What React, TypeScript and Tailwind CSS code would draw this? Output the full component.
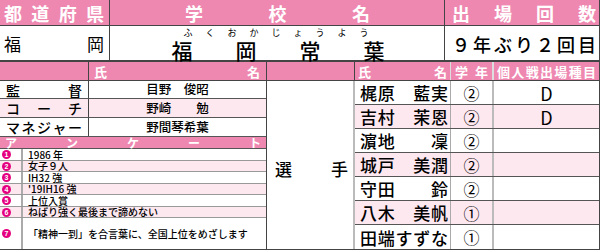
import React from 'react';

function Spread({ text, className = '' }: { text: string; className?: string }) {
  return (
    <div className={`flex w-full justify-between ${className}`}>
      {Array.from(text).map((c, i) => (
        <span key={i}>{c}</span>
      ))}
    </div>
  );
}

const staff = [
  { role: '監督', name: '目野　俊昭', cls: 'h-[18px] bg-white' },
  { role: 'コーチ', name: '野崎　　勉', cls: 'h-[19px] bg-[#FDE8F0]' },
  { role: 'マネジャー', name: '野間琴希葉', cls: 'h-[19px] bg-white' },
];

const survey = [
  { no: '1', text: '1986 年', cls: 'h-[12px] bg-white border-b' },
  { no: '2', text: '女子９人', cls: 'h-[11px] bg-[#FDE8F0] border-b' },
  { no: '3', text: 'IH32 強', cls: 'h-[12px] bg-white border-b' },
  { no: '4', text: "'19IH16 強", cls: 'h-[11px] bg-[#FDE8F0] border-b' },
  { no: '5', text: '上位入賞', cls: 'h-[12px] bg-white border-b' },
  { no: '6', text: 'ねばり強く最後まで諦めない', cls: 'h-[11px] bg-[#FDE8F0] border-b' },
  { no: '7', text: '「精神一到」を合言葉に、全国上位をめざします', cls: 'h-[31px] bg-white' },
];

const players = [
  { name: '梶原　藍実', grade: '②', event: 'D' },
  { name: '吉村　茉恩', grade: '②', event: 'D' },
  { name: '濵地　　凜', grade: '②', event: '' },
  { name: '城戸　美潤', grade: '②', event: '' },
  { name: '守田　　鈴', grade: '②', event: '' },
  { name: '八木　美帆', grade: '①', event: '' },
  { name: '田端すずな', grade: '①', event: '' },
];

export default function App() {
  return (
    <div className="w-[600px] h-[252px] bg-white text-black font-['Noto_Sans_CJK_JP',sans-serif]">
      <div className="w-[600px] border-r border-b border-[#444]">
        {/* 上段 見出し */}
        <div className="flex h-[26px] border-b border-[#444] bg-[#EE88B1] text-white font-bold text-[18px] leading-none">
          <div className="w-[110px] border-r border-[#444] flex items-center pl-[4px] pr-[5px]">
            <Spread text="都道府県" />
          </div>
          <div className="w-[335px] border-r border-[#444] flex items-center pl-[75px] pr-[74px]">
            <Spread text="学校名" />
          </div>
          <div className="flex-1 flex items-center pl-[7px] pr-[3px]">
            <Spread text="出場回数" />
          </div>
        </div>

        {/* 上段 内容 */}
        <div className="flex h-[36px] border-b-2 border-[#444]">
          <div className="w-[110px] border-r border-[#444] flex items-center pl-[4px] pr-[5px] text-[17px] leading-none">
            <Spread text="福岡" />
          </div>
          <div className="w-[335px] border-r border-[#444] flex flex-col">
            <div className="flex ml-[67px] h-[9px] mt-[2px] text-[9px] leading-[9px]">
              {Array.from('ふくおかじょうよう').map((c, i) => (
                <span key={i} className="w-[22px] text-center">{c}</span>
              ))}
            </div>
            <div className="flex ml-[40px] mt-[3px] h-[20px] text-[21px] leading-[20px] font-medium">
              {Array.from('福岡常葉').map((c, i) => (
                <span key={i} className="w-[64px] text-center">{c}</span>
              ))}
            </div>
          </div>
          <div className="flex-1 flex items-center pl-[7px] pr-[3px] pt-[2px] text-[18px] leading-none font-medium">
            <Spread text="９年ぶり２回目" />
          </div>
        </div>

        {/* 下段 */}
        <div className="flex">
          {/* 左側: 役員・アンケート・選手見出し */}
          <div className="w-[355px] flex flex-col">
            <div className="flex h-[19px] border-b border-[#444] bg-[#EE88B1] text-white font-bold text-[13px] leading-none">
              <div className="w-[89px] border-r border-[#444]" />
              <div className="w-[178px] border-r border-[#444] flex items-center pl-[5px] pr-[6px]">
                <Spread text="氏名" />
              </div>
              <div className="flex-1 border-r border-[#444]" />
            </div>
            <div className="flex h-[168px]">
              <div className="w-[267px] border-r border-[#444] flex flex-col">
                {staff.map((s) => (
                  <div key={s.role} className={`flex border-b border-[#555] ${s.cls}`}>
                    <div className="w-[89px] border-r border-[#444] flex items-center px-[6px] text-[14px] leading-none font-medium">
                      <Spread text={s.role} />
                    </div>
                    <div className="flex-1 flex items-center justify-center text-[12.5px] leading-none font-medium">
                      {s.name}
                    </div>
                  </div>
                ))}
                <div className="h-[12px] border-b border-[#555] bg-[#EE88B1] text-white font-bold text-[12px] leading-none flex items-center pl-[5px] pr-[5px]">
                  <Spread text="アンケート" />
                </div>
                {survey.map((q) => (
                  <div key={q.no} className={`flex border-[#999] ${q.cls}`}>
                    <div className="w-[23px] border-r-2 border-[#aaa] flex items-center pl-[2px]">
                      <span className="w-[9px] h-[9px] rounded-full bg-[#E4007F] text-white text-[7px] leading-[9px] font-bold text-center font-['Liberation_Sans',sans-serif]">
                        {q.no}
                      </span>
                    </div>
                    <div className="flex-1 flex items-center pl-[5px] text-[10px] leading-[10px] font-medium whitespace-nowrap">
                      {q.text}
                    </div>
                  </div>
                ))}
              </div>
              <div className="flex-1 border-r-2 border-[#bbb] flex items-center pl-[8px] pr-[5px] pt-[6px] text-[17px] leading-none font-medium">
                <Spread text="選手" />
              </div>
            </div>
          </div>

          {/* 右側: 選手一覧 */}
          <div className="flex-1 flex flex-col">
            <div className="flex h-[19px] border-b border-[#444] bg-[#EE88B1] text-white font-bold text-[13px] leading-none">
              <div className="w-[96px] border-r border-[#ddd] flex items-center pl-[3px] pr-[3px]">
                <Spread text="氏名" />
              </div>
              <div className="w-[43px] border-r-2 border-[#ddd] flex items-center px-[4px]">
                <Spread text="学年" />
              </div>
              <div className="flex-1 flex items-center pl-[3px] pr-[3px]">
                <Spread text="個人戦出場種目" />
              </div>
            </div>
            {players.map((p, i) => (
              <div
                key={p.name}
                className={`flex h-[24px] ${i < 6 ? 'border-b border-[#555]' : ''} ${i % 2 === 1 ? 'bg-[#FDE8F0]' : 'bg-white'}`}
              >
                <div className="w-[96px] border-r border-[#aaa] flex items-center pl-[5px] pr-[2px] text-[17px] leading-none font-medium">
                  <Spread text={p.name} />
                </div>
                <div className="w-[43px] border-r-2 border-[#bbb] flex items-center justify-center text-[16px] leading-none">
                  {p.grade}
                </div>
                <div className="flex-1 flex items-center justify-center text-[18px] leading-none">
                  {p.event}
                </div>
              </div>
            ))}
          </div>
        </div>
      </div>
    </div>
  );
}
